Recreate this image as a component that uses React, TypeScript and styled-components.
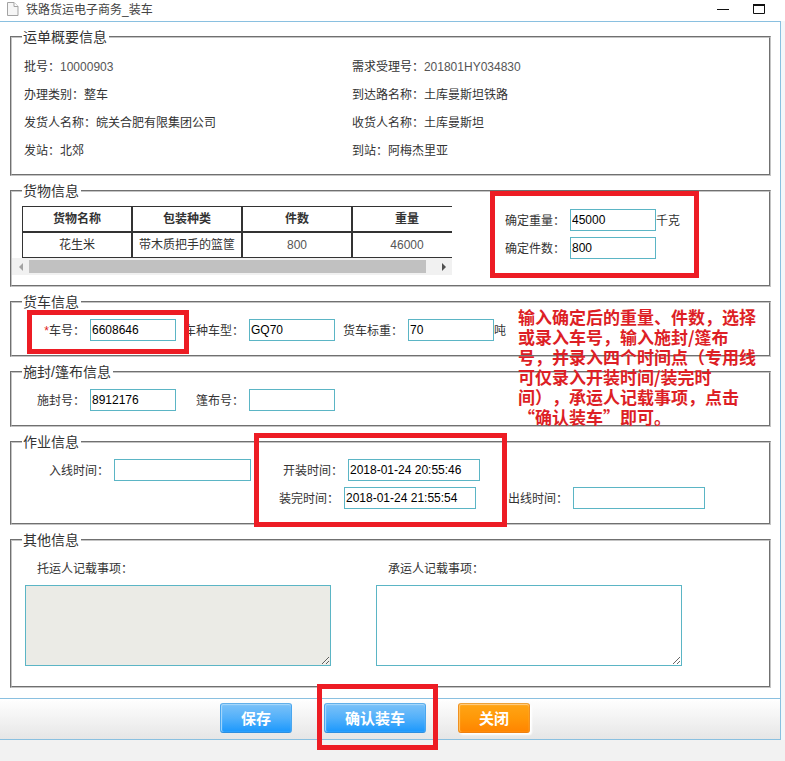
import React from "react";
import styled, { createGlobalStyle, css } from "styled-components";

const SANS = `"Liberation Sans", Arial, "Noto Sans CJK SC", sans-serif`;
const CJK = `"Noto Sans CJK SC", "Liberation Sans", sans-serif`;

const GlobalStyle = createGlobalStyle`
  *, *::before, *::after { box-sizing: border-box; }
  body {
    min-height: 100vh;
    margin: 0;
    background: #f2f2f2;
    color: #333;
    font: 12px/28px ${SANS};
    text-spacing-trim: space-all;
  }
  button, input, textarea { font-family: inherit; }
`;

const TitleBar = styled.header`
  display: flex;
  align-items: center;
  height: 21px;
  padding: 0 20px 3px 7px;
  background: #fff;
  color: #444;
  line-height: 18px;
`;

const Title = styled.h1`
  flex: 1;
  margin: 0 0 0 7px;
  padding-top: 2px;
  font-size: 12px;
  font-weight: normal;
`;

const WindowButton = styled.button`
  display: flex;
  padding: 0;
  margin-left: 24px;
  border: 0;
  background: none;
  color: #111;
`;

const Frame = styled.div`
  background: #f3f7fa;
  padding-right: 4px;
`;

const Panel = styled.form`
  border: solid #8ac0e0;
  border-width: 1px 1px 1px 0;
  background: #fff;
`;

const Sections = styled.div`
  display: flex;
  flex-direction: column;
  gap: 7px;
  padding: 7px 9px 10px 10px;
`;

const Section = styled.fieldset`
  min-width: 0;
  margin: 0;
  padding: 0;
  border: 2px groove #c4c4c4;
`;

const Legend = styled.legend`
  margin-left: 10px;
  padding: 0 2px 0 1px;
  font-size: 14px;
  line-height: 16px;
`;

const Summary = styled.dl`
  display: grid;
  grid-template-columns: 17fr 21fr;
  margin: 0;
  padding: 8px 12px 9px;
`;

const SummaryItem = styled.div`
  display: flex;
  dt, dd { margin: 0; }
`;

const Value = styled.span`
  color: #555;
`;

const CargoLayout = styled.div`
  display: flex;
  align-items: flex-start;
  padding: 7px 0 10px;
`;

const TablePane = styled.div`
  width: 440px;
  min-width: 0;
`;

const TableClip = styled.div`
  overflow: hidden;
  padding-left: 10px;
`;

const CargoTable = styled.table`
  width: 440px;
  table-layout: fixed;
  border-collapse: separate;
  border-spacing: 0;
  text-align: center;
  white-space: nowrap;

  th, td {
    height: 26px;
    padding: 0;
    border: 1px solid #333;
    line-height: 24px;
  }
`;

const ScrollBar = styled.div`
  display: flex;
  align-items: center;
  height: 17px;
  background: #f1f1f1;
`;

const ScrollArrow = styled.button`
  display: flex;
  align-items: center;
  justify-content: center;
  width: 17px;
  height: 17px;
  padding: 0;
  border: 0;
  background: none;
`;

const ScrollTrack = styled.div`
  flex: 1;
  padding-right: 9px;
`;

const ScrollThumb = styled.div`
  height: 13px;
  background: #c1c1c1;
`;

const ConfirmGroup = styled.div`
  position: relative;
  margin-left: 53px;
`;

const Highlight = styled.span<{ $inset: string }>`
  position: absolute;
  inset: ${(p) => p.$inset};
  z-index: 1;
  border: 5px solid #ed1c24;
  pointer-events: none;
`;

const FieldRows = styled.div`
  position: relative;
  padding: 6px 0 11px;
`;

const FieldRow = styled.div<{ $indent: number }>`
  display: flex;
  padding-left: ${(p) => p.$indent}px;
`;

const Field = styled.label<{ $gapAfter?: number }>`
  position: relative;
  display: flex;
  align-items: center;
  height: 28px;
  margin-right: ${(p) => p.$gapAfter ?? 0}px;
  white-space: nowrap;
`;

const FieldName = styled.span<{ $width: number }>`
  width: ${(p) => p.$width}px;
  margin-right: 5px;
  padding-top: 2px;
  text-align: right;
`;

const Required = styled.span`
  color: #e02020;
`;

const boxStyle = css`
  border: 1px solid #5bb5c5;
  border-radius: 0;
  outline: none;
  color: #000;
  font-size: 12px;
`;

const TextBox = styled.input<{ $width: number }>`
  ${boxStyle}
  width: ${(p) => p.$width}px;
  height: 22px;
  padding: 0 1px;
  background: #fff;
`;

const Unit = styled.span`
  width: 0;
  padding-top: 2px;
`;

const Note = styled.p`
  position: absolute;
  top: -3px;
  left: 506px;
  z-index: 2;
  margin: 0;
  color: #dd1f26;
  font: bold 17px/20px ${CJK};
  white-space: nowrap;
`;

const Remarks = styled.div`
  display: flex;
  gap: 45px;
  padding: 7px 13px 20px;
`;

const Remark = styled.label`
  display: flex;
  flex-direction: column;
  gap: 2px;
  width: 306px;
`;

const RemarkName = styled.span`
  padding-left: 12px;
`;

const RemarkBox = styled.textarea`
  ${boxStyle}
  height: 81px;
  padding: 2px;
  background: #fff;
  resize: both;

  &:read-only { background: #ebebe6; }
`;

const Footer = styled.footer`
  display: flex;
  justify-content: center;
  gap: 32px;
  padding: 4px 30px 6px 0;
  border-top: 1px solid #8ac0e0;
  background: linear-gradient(#fff, #e6e6e6);
`;

const ActionSlot = styled.div`
  position: relative;
  display: flex;
`;

const Action = styled.button<{ $tone: "blue" | "orange" }>`
  height: 30px;
  padding: 0 20px;
  border: 1px solid;
  border-radius: 3px;
  color: #fff;
  font: bold 15px/28px ${CJK};
  ${(p) =>
    p.$tone === "blue"
      ? css`
          border-color: #62b0ea #4aa6ee #2c8fe0;
          background: linear-gradient(#7cc2f8, #52b0fa 50%, #1b98fd);
          box-shadow: inset 0 1px 1px #a9d9fb, inset 1px 0 1px #a9d9fb;
        `
      : css`
          border-color: #eda23a #f09020 #f08010;
          background: linear-gradient(#ffa516, #ff9808 50%, #ff8400);
          box-shadow: inset 0 1px 1px #ffd08a, inset 1px 0 1px #ffc465, 2px 2px 2px #fff;
        `}
`;

const summary: { name: string; value: string; latin?: boolean }[] = [
  { name: "批号：", value: "10000903", latin: true },
  { name: "需求受理号：", value: "201801HY034830", latin: true },
  { name: "办理类别：", value: "整车" },
  { name: "到达路名称：", value: "土库曼斯坦铁路" },
  { name: "发货人名称：", value: "皖关合肥有限集团公司" },
  { name: "收货人名称：", value: "土库曼斯坦" },
  { name: "发站：", value: "北郊" },
  { name: "到站：", value: "阿梅杰里亚" },
];

interface InputFieldProps {
  name: string;
  value?: string;
  nameWidth?: number;
  width?: number;
  gapAfter?: number;
  required?: boolean;
  unit?: string;
  highlight?: string;
}

function InputField({
  name,
  value = "",
  nameWidth = 68,
  width = 86,
  gapAfter = 0,
  required,
  unit,
  highlight,
}: InputFieldProps) {
  return (
    <Field $gapAfter={gapAfter}>
      <FieldName $width={nameWidth}>
        {required && <Required>*</Required>}
        {name}
      </FieldName>
      <TextBox type="text" defaultValue={value} $width={width} />
      {unit && <Unit>{unit}</Unit>}
      {highlight && <Highlight $inset={highlight} />}
    </Field>
  );
}

export default function App() {
  return (
    <>
      <GlobalStyle />
      <TitleBar>
        <svg width="12" height="14" viewBox="0 0 12 14" aria-hidden="true">
          <path d="M.5.5h6.5l4 4v9H.5z" fill="#f6f6f6" stroke="#a3a3a3" />
          <path d="M7 .5v4h4" fill="#fff" stroke="#a3a3a3" />
        </svg>
        <Title>铁路货运电子商务_装车</Title>
        <WindowButton type="button" aria-label="最小化">
          <svg width="12" height="11" viewBox="0 0 12 11">
            <path d="M0 5.5h12" stroke="currentColor" />
          </svg>
        </WindowButton>
        <WindowButton type="button" aria-label="最大化">
          <svg width="12" height="10" viewBox="0 0 12 10">
            <path d="M.5 1v8.500h11V1" fill="none" stroke="currentColor" />
            <path d="M0 1h12" stroke="currentColor" strokeWidth="2" />
          </svg>
        </WindowButton>
      </TitleBar>

      <Frame>
        <Panel onSubmit={(e) => e.preventDefault()}>
          <Sections>
            <Section>
              <Legend>运单概要信息</Legend>
              <Summary>
                {summary.map((item) => (
                  <SummaryItem key={item.name}>
                    <dt>{item.name}</dt>
                    <dd>{item.latin ? <Value>{item.value}</Value> : item.value}</dd>
                  </SummaryItem>
                ))}
              </Summary>
            </Section>

            <Section>
              <Legend>货物信息</Legend>
              <CargoLayout>
                <TablePane>
                  <TableClip>
                    <CargoTable>
                      <thead>
                        <tr>
                          <th>货物名称</th>
                          <th>包装种类</th>
                          <th>件数</th>
                          <th>重量</th>
                        </tr>
                      </thead>
                      <tbody>
                        <tr>
                          <td>花生米</td>
                          <td>带木质把手的篮筐</td>
                          <td><Value>800</Value></td>
                          <td><Value>46000</Value></td>
                        </tr>
                      </tbody>
                    </CargoTable>
                  </TableClip>
                  <ScrollBar>
                    <ScrollArrow type="button" aria-label="向左滚动">
                      <svg width="4" height="8" viewBox="0 0 4 8">
                        <path d="M4 0v8L0 4z" fill="#a3a3a3" />
                      </svg>
                    </ScrollArrow>
                    <ScrollTrack>
                      <ScrollThumb />
                    </ScrollTrack>
                    <ScrollArrow type="button" aria-label="向右滚动">
                      <svg width="4" height="8" viewBox="0 0 4 8">
                        <path d="M0 0v8l4-4z" fill="#505050" />
                      </svg>
                    </ScrollArrow>
                  </ScrollBar>
                </TablePane>
                <ConfirmGroup>
                  <InputField name="确定重量：" value="45000" nameWidth={60} unit="千克" />
                  <InputField name="确定件数：" value="800" nameWidth={60} />
                  <Highlight $inset="-15px -43px -16px -15px" />
                </ConfirmGroup>
              </CargoLayout>
            </Section>

            <Section>
              <Legend>货车信息</Legend>
              <FieldRows>
                <FieldRow $indent={5}>
                  <InputField
                    name="车号："
                    value="6608646"
                    required
                    highlight="-6px -13px -10px 10px"
                  />
                  <InputField name="车种车型：" value="GQ70" />
                  <InputField name="货车标重：" value="70" unit="吨" />
                </FieldRow>
                <Note>
                  输入确定后的重量、件数，选择
                  <br />
                  或录入车号，输入施封/篷布
                  <br />
                  号，并录入四个时间点（专用线
                  <br />
                  可仅录入开装时间/装完时
                  <br />
                  间），承运人记载事项，点击
                  <br />
                  “确认装车”即可。
                </Note>
              </FieldRows>
            </Section>

            <Section>
              <Legend>施封/篷布信息</Legend>
              <FieldRows>
                <FieldRow $indent={5}>
                  <InputField name="施封号：" value="8912176" />
                  <InputField name="篷布号：" />
                </FieldRow>
              </FieldRows>
            </Section>

            <Section>
              <Legend>作业信息</Legend>
              <FieldRows>
                <FieldRow $indent={37}>
                  <InputField name="入线时间：" nameWidth={60} width={137} gapAfter={32} />
                  <InputField
                    name="开装时间："
                    value="2018-01-24 20:55:46"
                    nameWidth={60}
                    width={132}
                    highlight="-23px -27px -43px -29px"
                  />
                </FieldRow>
                <FieldRow $indent={267}>
                  <InputField
                    name="装完时间："
                    value="2018-01-24 21:55:54"
                    nameWidth={60}
                    width={132}
                    gapAfter={32}
                  />
                  <InputField name="出线时间：" nameWidth={60} width={132} />
                </FieldRow>
              </FieldRows>
            </Section>

            <Section>
              <Legend>其他信息</Legend>
              <Remarks>
                <Remark>
                  <RemarkName>托运人记载事项：</RemarkName>
                  <RemarkBox readOnly />
                </Remark>
                <Remark>
                  <RemarkName>承运人记载事项：</RemarkName>
                  <RemarkBox />
                </Remark>
              </Remarks>
            </Section>
          </Sections>

          <Footer>
            <Action type="button" $tone="blue">保存</Action>
            <ActionSlot>
              <Action type="submit" $tone="blue">确认装车</Action>
              <Highlight $inset="-19px -12px -17px -7px" />
            </ActionSlot>
            <Action type="button" $tone="orange">关闭</Action>
          </Footer>
        </Panel>
      </Frame>
    </>
  );
}
